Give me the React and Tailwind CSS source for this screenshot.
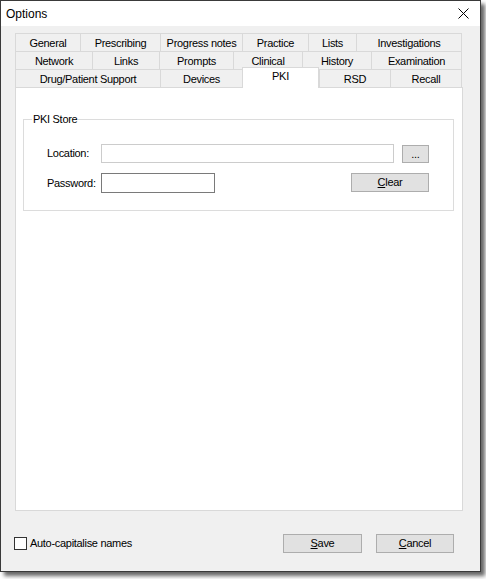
const tabRows = [
  [
    { label: 'General', w: 'w-[65px]' },
    { label: 'Prescribing', w: 'w-[80px]' },
    { label: 'Progress notes', w: 'w-[82px]' },
    { label: 'Practice', w: 'w-[66px]' },
    { label: 'Lists', w: 'w-[48px]' },
    { label: 'Investigations', w: 'w-[106px]' },
  ],
  [
    { label: 'Network', w: 'w-[77px]' },
    { label: 'Links', w: 'w-[67px]' },
    { label: 'Prompts', w: 'w-[74px]' },
    { label: 'Clinical', w: 'w-[69px]' },
    { label: 'History', w: 'w-[69px]' },
    { label: 'Examination', w: 'w-[91px]' },
  ],
  [
    { label: 'Drug/Patient Support', w: 'w-[145px]' },
    { label: 'Devices', w: 'w-[82px]' },
    { label: 'PKI', w: 'w-[77px]', active: true },
    { label: 'RSD', w: 'w-[71px]' },
    { label: 'Recall', w: 'w-[72px]' },
  ],
];

const Tab = ({ label, w, active, last }) => {
  if (active) {
    return (
      <div className={`${w} relative z-10 -mt-[2px] h-[21px] bg-white border-l border-t border-r border-[#d9d9d9] flex justify-center pt-[2px] leading-[13px]`}>
        {label}
      </div>
    );
  }
  return (
    <div className={`${w} h-[18px] border-l border-t border-[#d9d9d9] ${last ? 'border-r' : ''} flex items-center justify-center pt-px leading-[13px]`}>
      {label}
    </div>
  );
};

const WinButton = ({ className, children }) => (
  <button className={`${className} bg-[#e1e1e1] border border-[#adadad] text-[11px] leading-[13px] text-black flex items-center justify-center`}>
    {children}
  </button>
);

export default function App() {
  return (
    <div className="min-h-screen bg-white" style={{ fontFamily: '"Liberation Sans", Arial, sans-serif' }}>
      <div className="w-[481px] h-[572px] border border-[#3a3a3a] flex flex-col shadow-[4px_4px_4px_rgba(0,0,0,0.6)] text-[11px] tracking-[-0.3px] text-black">
        {/* title bar */}
        <div className="h-[25px] bg-white flex items-center justify-between pl-[5px] pr-[11px]">
          <span className="text-[12px] leading-[14px] tracking-normal">Options</span>
          <svg width="11" height="11" viewBox="0 0 11 11">
            <path d="M0.5 0.5 L10.5 10.5 M10.5 0.5 L0.5 10.5" stroke="#000" strokeWidth="1" />
          </svg>
        </div>

        <div className="flex-1 bg-[#f0f0f0] pl-[14px] pt-[7px]">
          {/* tab headers */}
          <div className="w-[448px]">
            {tabRows.map((row, i) => (
              <div key={i} className="flex h-[18px]">
                {row.map((t, j) => (
                  <Tab key={t.label} {...t} last={j === row.length - 1} />
                ))}
              </div>
            ))}
          </div>

          {/* PKI page */}
          <div className="w-[448px] h-[424px] bg-white border border-[#d9d9d9] pl-[7px] pt-[25px]">
            <fieldset className="w-[431px] h-[98px] border border-[#dcdcdc] px-0 pb-0">
              <legend className="ml-[8px] px-[1px] leading-[13px]">PKI Store</legend>
              <div className="pl-[23px] pt-[18px] w-[405px]">
                <div className="flex items-start">
                  <span className="w-[54px] h-[19px] flex items-center">Location:</span>
                  <div className="w-[293px] h-[19px] bg-white border border-[#cccccc]" />
                  <WinButton className="ml-[8px] mt-px w-[27px] h-[18px]">...</WinButton>
                </div>
                <div className="flex items-start mt-[10px]">
                  <span className="w-[54px] h-[20px] flex items-center">Password:</span>
                  <div className="w-[114px] h-[20px] bg-white border border-[#7a7a7a]" />
                  <WinButton className="ml-auto w-[78px] h-[19px]">
                    <span><u className="underline-offset-1">C</u>lear</span>
                  </WinButton>
                </div>
              </div>
            </fieldset>
          </div>

          {/* footer */}
          <div className="flex items-center h-[19px] mt-[23px] pr-[26px] -ml-px">
            <div className="w-[13px] h-[13px] bg-white border border-[#333333]" />
            <span className="ml-[3px] leading-[13px]">Auto-capitalise names</span>
            <WinButton className="ml-auto w-[79px] h-[19px]">
              <span><u className="underline-offset-1">S</u>ave</span>
            </WinButton>
            <WinButton className="ml-[14px] w-[78px] h-[19px]">
              <span><u className="underline-offset-1">C</u>ancel</span>
            </WinButton>
          </div>
        </div>
      </div>
    </div>
  );
}
